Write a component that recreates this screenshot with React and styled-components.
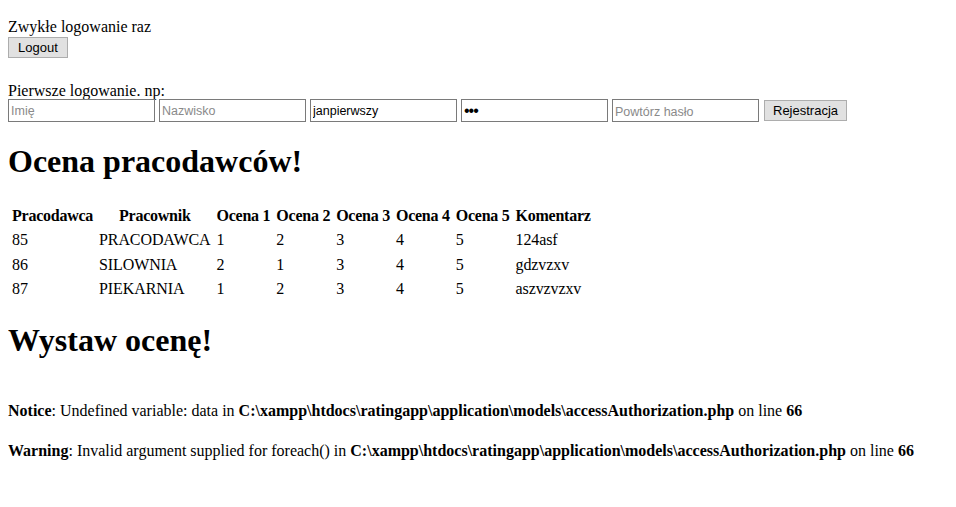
import React from 'react';
import styled, { createGlobalStyle } from 'styled-components';

const Global = createGlobalStyle`
  body {
    margin: 8px;
    font-family: "Liberation Serif", "Times New Roman", serif;
    font-size: 16px;
    color: #000;
    background: #fff;
  }
`;

const Section = styled.div`
  padding-top: ${p => p.$top || 0}px;
  margin-bottom: ${p => p.$bottom || 0}px;
  line-height: 18px;
`;

const Form = styled.form`
  display: flex;
  align-items: center;
  gap: 4px;
  margin: ${p => p.$top || 0}px 0 0;
`;

const Button = styled.button`
  font-family: Tahoma, "Liberation Sans", Arial, sans-serif;
  font-size: 13px;
  height: 21px;
  padding: 0 ${p => p.$pad || 9}px;
  background: #e1e1e1;
  border: 1px solid #adadad;
  color: #000;
  margin-left: ${p => p.$left || 0}px;
`;

const Input = styled.input`
  box-sizing: border-box;
  width: 147px;
  height: 23px;
  border: 1px solid #7a7a7a;
  padding: 1px 2px;
  font-family: Tahoma, "Liberation Sans", Arial, sans-serif;
  font-size: 12.5px;
  color: #000;
  &::placeholder { color: #8a8a8a; }
  &[type="password"] { font-size: 16px; letter-spacing: -1px; }
  &[type="password"]::placeholder { font-size: 12.5px; letter-spacing: 0; }
`;

const Heading = styled.h1`
  font-size: 32px;
  font-weight: bold;
  margin: ${p => p.$before || 21}px 0 ${p => p.$after || 21}px;
  line-height: 37px;
`;

const Table = styled.table`
  border-spacing: 2px;
  th, td {
    padding: 2px;
    line-height: 18.4px;
  }
  th { text-align: center; letter-spacing: -0.25px; }
  th:first-child { text-align: left; }
  td { text-align: left; letter-spacing: -0.1px; }
`;

const Notice = styled.div`
  margin-top: 42px;
  line-height: 20px;
  font-size: 16px;
  p { margin: 0 0 20px; }
`;

const rows = [
  ['85', 'PRACODAWCA', '1', '2', '3', '4', '5', '124asf'],
  ['86', 'SILOWNIA', '2', '1', '3', '4', '5', 'gdzvzxv'],
  ['87', 'PIEKARNIA', '1', '2', '3', '4', '5', 'aszvzvzxv'],
];

export default function App() {
  return (
    <>
      <Global />
      <Section $top={10} $bottom={24}>
        Zwykłe logowanie raz
        <Form $top={1}>
          <Button $pad={9}>Logout</Button>
        </Form>
      </Section>
      <Section>
        Pierwsze logowanie. np:
        <Form $top={-1}>
          <Input placeholder="Imię" />
          <Input placeholder="Nazwisko" />
          <Input defaultValue="janpierwszy" />
          <Input type="password" defaultValue="abc" />
          <Input type="password" placeholder="Powtórz hasło" />
          <Button $pad={8} $left={1}>Rejestracja</Button>
        </Form>
      </Section>
      <Heading $after={23}>Ocena pracodawców!</Heading>
      <Table>
        <thead>
          <tr>
            <th>Pracodawca</th>
            <th>Pracownik</th>
            <th>Ocena 1</th>
            <th>Ocena 2</th>
            <th>Ocena 3</th>
            <th>Ocena 4</th>
            <th>Ocena 5</th>
            <th>Komentarz</th>
          </tr>
        </thead>
        <tbody>
          {rows.map(r => (
            <tr key={r[0]}>
              {r.map((c, i) => <td key={i}>{c}</td>)}
            </tr>
          ))}
        </tbody>
      </Table>
      <Heading $before={19}>Wystaw ocenę!</Heading>
      <Notice>
        <p><b>Notice</b>: Undefined variable: data in <b>C:\xampp\htdocs\ratingapp\application\models\accessAuthorization.php</b> on line <b>66</b></p>
        <p><b>Warning</b>: Invalid argument supplied for foreach() in <b>C:\xampp\htdocs\ratingapp\application\models\accessAuthorization.php</b> on line <b>66</b></p>
      </Notice>
    </>
  );
}
